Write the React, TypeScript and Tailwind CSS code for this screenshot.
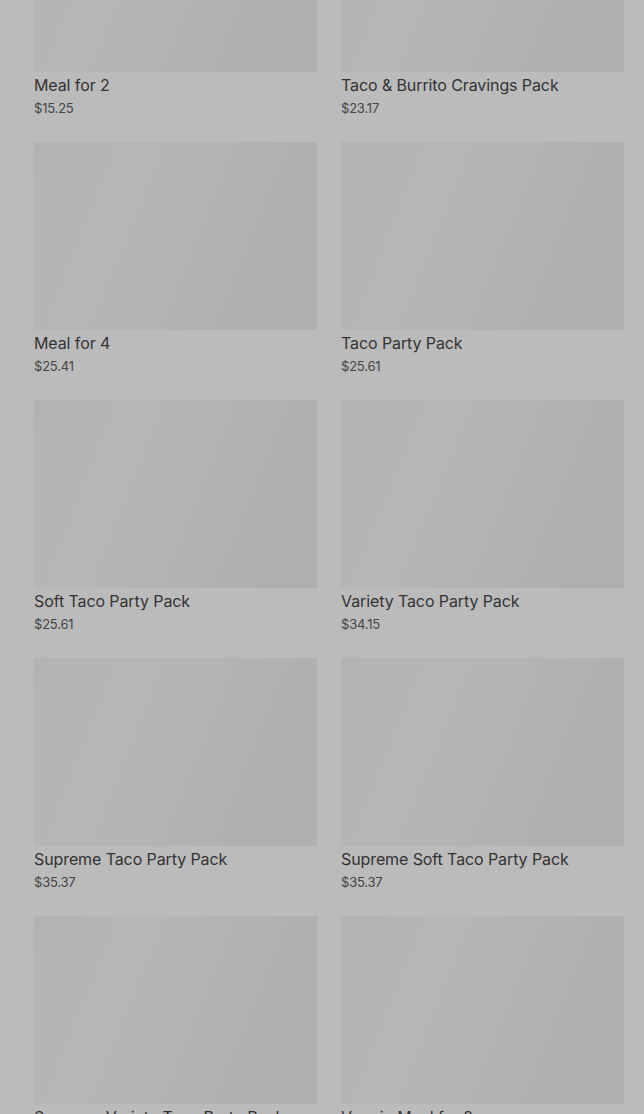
const items = [
  { name: "Meal for 2", price: "$15.25" },
  { name: "Taco & Burrito Cravings Pack", price: "$23.17" },
  { name: "Meal for 4", price: "$25.41" },
  { name: "Taco Party Pack", price: "$25.61" },
  { name: "Soft Taco Party Pack", price: "$25.61" },
  { name: "Variety Taco Party Pack", price: "$34.15" },
  { name: "Supreme Taco Party Pack", price: "$35.37" },
  { name: "Supreme Soft Taco Party Pack", price: "$35.37" },
  { name: "Supreme Variety Taco Party Pack", price: "$40.05" },
  { name: "Veggie Meal for 2", price: "$15.25" },
];

export default function App() {
  return (
    <div className="min-h-screen overflow-hidden bg-[#bbbbbb] pl-[34px] pr-[20px] font-['Inter',sans-serif] text-[#333333]">
      <div className="-mt-[116px] grid grid-cols-2 gap-x-6 gap-y-[25px]">
        {items.map((item) => (
          <div key={item.name}>
            <div className="h-[188px] bg-[linear-gradient(112deg,#b3b3b3_0%,#b6b6b6_30%,#b4b4b4_50%,#b0b0b0_75%,#afafaf_100%)]" />
            <p className="mt-[3px] text-[16px] font-normal leading-5 tracking-[-0.1px]">{item.name}</p>
            <p className="mt-[4px] text-[13px] leading-[18px] text-[#454545] tracking-[-0.2px]">{item.price}</p>
          </div>
        ))}
      </div>
    </div>
  );
}
